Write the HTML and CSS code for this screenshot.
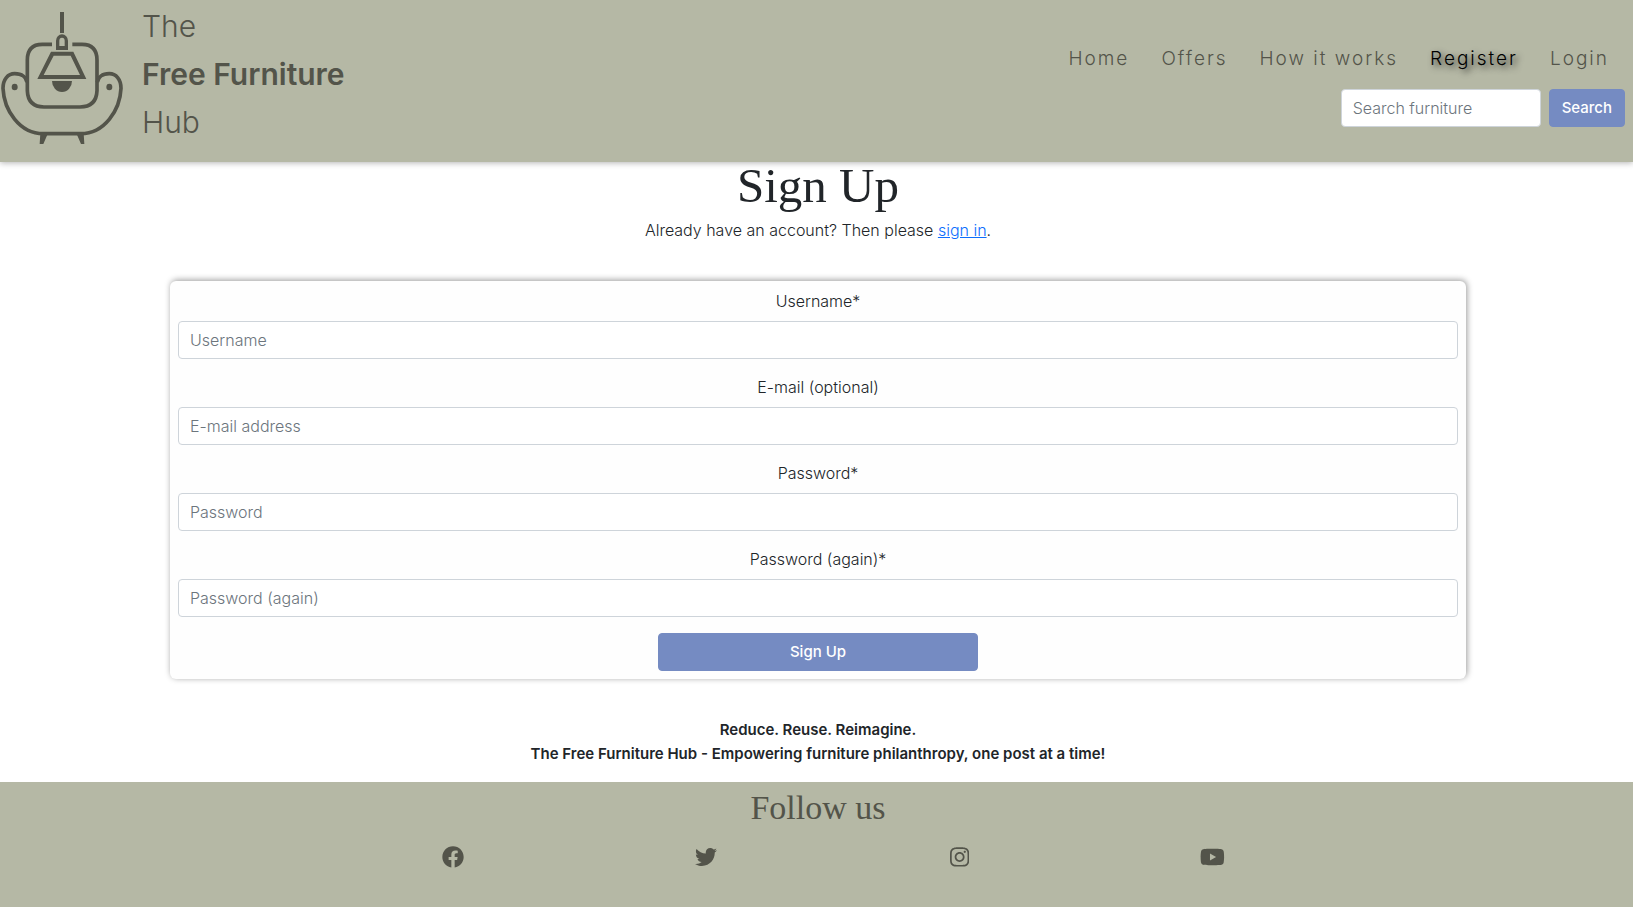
FILE: index.html
```html
<!DOCTYPE html>
<html lang="en">
<head>
<meta charset="utf-8">
<meta name="viewport" content="width=device-width, initial-scale=1">
<title>The Free Furniture Hub - Sign Up</title>
<link rel="stylesheet" href="styles.css">
</head>
<body>
<header class="site-header">
  <a class="brand" href="#">
    <svg class="brand-logo" viewBox="0 6 372 432" aria-hidden="true">
      <g fill="none" stroke="currentColor" stroke-width="11">
        <path d="M156 133H127Q82 133 82 180V272Q84 321 132 321H240Q289 321 291 272V180Q291 133 246 133H217"/>
        <path d="M81 247C79 232 66 221 44 221C24 221 9 238 9 265C12 330 58 401 130 401H242C314 401 360 330 363 265C363 238 348 221 328 221C306 221 294 232 292 247"/>
      </g>
      <g fill="currentColor">
        <path d="M180 36h12v63h-12z"/>
        <path fill-rule="evenodd" d="M168 150V122a18 19 0 0 1 36 0V150ZM178 138H194V122a8 9 0 0 0-16 0Z"/>
        <path fill-rule="evenodd" d="M153 155H220L259 237H112ZM161 167L131 225H240L212 167Z"/>
        <path d="M156 243H216A30 33 0 0 1 156 243Z"/>
        <ellipse cx="44" cy="261" rx="9" ry="10"/>
        <ellipse cx="328" cy="261" rx="9" ry="10"/>
        <path d="M121 400H144L130 432H119ZM229 400H251L253 432H243Z"/>
      </g>
    </svg>
    <span class="brand-name">The<br><strong>Free Furniture</strong><br>Hub</span>
  </a>
  <div class="header-tools">
    <nav class="site-nav" aria-label="Main">
      <a class="nav-link" href="#">Home</a>
      <a class="nav-link" href="#">Offers</a>
      <a class="nav-link" href="#">How it works</a>
      <a class="nav-link nav-link-active" href="#" aria-current="page">Register</a>
      <a class="nav-link" href="#">Login</a>
    </nav>
    <form class="search" role="search">
      <input class="field search-field" type="search" placeholder="Search furniture" aria-label="Search furniture">
      <button class="button" type="submit">Search</button>
    </form>
  </div>
</header>

<main class="page">
  <h1 class="page-title">Sign Up</h1>
  <p class="intro">Already have an account? Then please <a class="text-link" href="#">sign in</a>.</p>
  <form class="card">
    <div class="form-group">
      <label for="username">Username*</label>
      <input class="field" id="username" type="text" placeholder="Username">
    </div>
    <div class="form-group">
      <label for="email">E-mail (optional)</label>
      <input class="field" id="email" type="email" placeholder="E-mail address">
    </div>
    <div class="form-group">
      <label for="password">Password*</label>
      <input class="field" id="password" type="password" placeholder="Password">
    </div>
    <div class="form-group">
      <label for="password-again">Password (again)*</label>
      <input class="field" id="password-again" type="password" placeholder="Password (again)">
    </div>
    <button class="button button-wide" type="submit">Sign Up</button>
  </form>
  <p class="tagline">Reduce. Reuse. Reimagine.<br>The Free Furniture Hub - Empowering furniture philanthropy, one post at a time!</p>
</main>

<footer class="site-footer">
  <h2 class="footer-title">Follow us</h2>
  <ul class="social">
    <li><a href="#" aria-label="Facebook"><svg class="social-icon" viewBox="0 0 512 512"><path d="M504 256C504 119 393 8 256 8S8 119 8 256c0 123.780 90.690 226.380 209.250 245V327.690h-63V256h63v-54.640c0-62.150 37-96.480 93.670-96.480 27.140 0 55.520 4.840 55.520 4.840v61h-31.280c-30.800 0-40.410 19.120-40.410 38.730V256h68.780l-11 71.690h-57.780V501C413.310 482.380 504 379.780 504 256z"/></svg></a></li>
    <li><a href="#" aria-label="Twitter"><svg class="social-icon" viewBox="0 0 512 512"><path d="M459.370 151.716c.325 4.548.325 9.097.325 13.645 0 138.720-105.583 298.558-298.558 298.558-59.452 0-114.680-17.219-161.137-47.106 8.447.974 16.568 1.299 25.340 1.299 49.055 0 94.213-16.568 130.274-44.832-46.132-.975-84.792-31.188-98.112-72.772 6.498.974 12.995 1.624 19.818 1.624 9.421 0 18.843-1.300 27.614-3.573-48.081-9.747-84.143-51.980-84.143-102.985v-1.299c13.969 7.797 30.214 12.670 47.431 13.319-28.264-18.843-46.781-51.005-46.781-87.391 0-19.492 5.197-37.360 14.294-52.954 51.655 63.675 129.300 105.258 216.365 109.807-1.624-7.797-2.599-15.918-2.599-24.040 0-57.828 46.782-104.934 104.934-104.934 30.213 0 57.502 12.670 76.670 33.137 23.715-4.548 46.456-13.320 66.599-25.340-7.798 24.366-24.366 44.833-46.132 57.827 21.117-2.273 41.584-8.122 60.426-16.243-14.292 20.791-32.161 39.308-52.628 54.253z"/></svg></a></li>
    <li><a href="#" aria-label="Instagram"><svg class="social-icon" viewBox="0 0 448 512"><path d="M224.100 141c-63.600 0-114.900 51.300-114.900 114.900s51.300 114.900 114.900 114.900S339 319.500 339 255.900 287.700 141 224.100 141zm0 189.600c-41.100 0-74.700-33.500-74.700-74.700s33.500-74.700 74.700-74.700 74.700 33.500 74.700 74.700-33.600 74.700-74.700 74.700zm146.400-194.300c0 14.900-12 26.800-26.800 26.800-14.900 0-26.800-12-26.800-26.800s12-26.800 26.800-26.800 26.800 12 26.800 26.800zm76.100 27.200c-1.700-35.900-9.900-67.700-36.200-93.900-26.200-26.200-58-34.400-93.900-36.200-37-2.100-147.900-2.100-184.900 0-35.800 1.700-67.600 9.900-93.900 36.100s-34.400 58-36.200 93.900c-2.100 37-2.100 147.900 0 184.900 1.700 35.900 9.900 67.700 36.200 93.900s58 34.400 93.900 36.200c37 2.100 147.900 2.100 184.900 0 35.900-1.700 67.700-9.900 93.900-36.200 26.200-26.200 34.400-58 36.200-93.900 2.100-37 2.100-147.800 0-184.800zM398.800 388c-7.800 19.600-22.900 34.700-42.600 42.600-29.500 11.700-99.500 9-132.100 9s-102.700 2.600-132.100-9c-19.600-7.800-34.700-22.900-42.600-42.600-11.700-29.500-9-99.500-9-132.100s-2.600-102.700 9-132.100c7.800-19.600 22.900-34.700 42.600-42.600 29.500-11.700 99.500-9 132.100-9s102.700-2.600 132.100 9c19.600 7.800 34.700 22.900 42.600 42.600 11.700 29.500 9 99.500 9 132.100s2.700 102.700-9 132.100z"/></svg></a></li>
    <li><a href="#" aria-label="YouTube"><svg class="social-icon" viewBox="0 0 576 512"><path d="M549.655 124.083c-6.281-23.650-24.787-42.276-48.284-48.597C458.781 64 288 64 288 64S117.220 64 74.629 75.486c-23.497 6.322-42.003 24.947-48.284 48.597-11.412 42.867-11.412 132.305-11.412 132.305s0 89.438 11.412 132.305c6.281 23.650 24.787 41.500 48.284 47.821C117.220 448 288 448 288 448s170.780 0 213.371-11.486c23.497-6.321 42.003-24.171 48.284-47.821 11.412-42.867 11.412-132.305 11.412-132.305s0-89.438-11.412-132.305zm-317.510 213.508V175.185l142.739 81.205-142.739 81.201z"/></svg></a></li>
  </ul>
</footer>
</body>
</html>
```
FILE: styles.css
```css
:root {
  --sage: #b5b8a5;
  --olive: #53544a;
  --blue: #758bc2;
  --ink: #212529;
}

* { box-sizing: border-box; }

body {
  display: flex;
  flex-direction: column;
  min-height: 100vh;
  margin: 0;
  background: #fff;
  color: var(--ink);
  font: 300 16px/24px Inter, "Liberation Sans", sans-serif;
}

.site-header {
  position: relative;
  display: flex;
  flex-wrap: wrap;
  align-items: center;
  justify-content: space-between;
  background: var(--sage);
  box-shadow: 0 1px 6px rgba(0, 0, 0, 0.3);
}

.brand {
  display: flex;
  align-items: center;
  gap: 18px;
  padding: 2px 0 16px;
  color: var(--olive);
  text-decoration: none;
}

.brand-logo { width: 124px; height: 144px; }
.brand-name { font-size: 30px; line-height: 48px; }
.brand-name strong { font-weight: 600; }

.header-tools {
  display: flex;
  flex-direction: column;
  align-items: flex-end;
  gap: 6px;
  padding-right: 8px;
}

.site-nav { display: flex; flex-wrap: wrap; }

.nav-link {
  padding: 8px 16px;
  color: var(--olive);
  font-size: 19px;
  line-height: 32px;
  letter-spacing: 2px;
  text-decoration: none;
}

.nav-link-active {
  color: #000;
  text-shadow: 3px 3px 6px rgba(0, 0, 0, 0.8);
}

.search { display: flex; gap: 8px; }

.field {
  display: block;
  width: 100%;
  height: 38px;
  padding: 6px 11px;
  border: 1px solid #ced4da;
  border-radius: 4px;
  background: #fff;
  color: var(--ink);
  font: inherit;
}

.field::placeholder { color: #6c757d; opacity: 1; }
.search-field { width: 200px; }

.button {
  height: 38px;
  padding: 6px 12px;
  border: 1px solid var(--blue);
  border-radius: 4px;
  background: var(--blue);
  color: #fff;
  font: inherit;
  font-size: 15px;
  font-weight: 500;
}

.page { padding-left: 3px; text-align: center; }

.page-title {
  margin: 0 0 8px;
  font: 400 49px/48px "Liberation Serif", serif;
}

.intro { margin: 0; }
.text-link { color: #0d6efd; }

.card {
  display: flex;
  flex-direction: column;
  align-items: center;
  gap: 16px;
  max-width: 1296px;
  margin: 39px auto;
  padding: 8px;
  border-radius: 6px;
  background: #fefefe;
  box-shadow: 1px -1px 6px rgba(0, 0, 0, 0.4);
}

.form-group {
  display: flex;
  flex-direction: column;
  gap: 8px;
  width: 100%;
}

.button-wide { width: 320px; max-width: 100%; }
.tagline { margin: 0 0 16px; font-size: 15px; font-weight: 600; }

.site-footer {
  flex: 1;
  padding-top: 8px;
  background: var(--sage);
  color: var(--olive);
  text-align: center;
}

.footer-title {
  margin: 0;
  padding-left: 3px;
  font: 400 34px/36px "Liberation Serif", serif;
}

.social {
  display: flex;
  width: 64%;
  margin: 16px auto 0;
  padding: 0 0 0 32px;
  list-style: none;
}

.social li { flex: 1; }
.social a { display: inline-flex; padding: 4px; color: inherit; }
.social-icon { height: 22px; fill: currentColor; }
```
